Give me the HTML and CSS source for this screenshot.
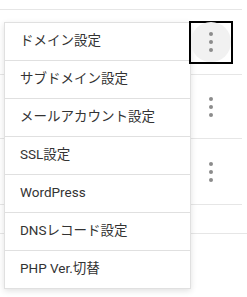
FILE: index.html
```html
<!DOCTYPE html>
<html lang="ja">
<head>
    <meta charset="UTF-8">
    <meta name="viewport" content="width=device-width, initial-scale=1.0">
    <title>ドメイン一覧</title>
    <link rel="stylesheet" href="styles.css">
</head>
<body>
    <div class="list">
        <div class="row">
            <div class="action-focus">
                <button class="action-button active" aria-label="メニュー">
                    <svg width="4" height="20" viewBox="0 0 4 20"><circle cx="2" cy="2" r="2"/><circle cx="2" cy="10" r="2"/><circle cx="2" cy="18" r="2"/></svg>
                </button>
            </div>
        </div>
        <div class="row row-short">
            <div class="action-cell">
                <button class="action-button" aria-label="メニュー">
                    <svg width="4" height="20" viewBox="0 0 4 20"><circle cx="2" cy="2" r="2"/><circle cx="2" cy="10" r="2"/><circle cx="2" cy="18" r="2"/></svg>
                </button>
            </div>
        </div>
        <div class="row row-tall">
            <div class="action-cell">
                <button class="action-button" aria-label="メニュー">
                    <svg width="4" height="20" viewBox="0 0 4 20"><circle cx="2" cy="2" r="2"/><circle cx="2" cy="10" r="2"/><circle cx="2" cy="18" r="2"/></svg>
                </button>
            </div>
        </div>
    </div>
    <div class="footer"></div>

    <ul class="menu">
        <li>ドメイン設定</li>
        <li>サブドメイン設定</li>
        <li>メールアカウント設定</li>
        <li>SSL設定</li>
        <li>WordPress</li>
        <li>DNSレコード設定</li>
        <li>PHP Ver.切替</li>
    </ul>
</body>
</html>
```

FILE: styles.css
```css
body {
    margin: 0;
    background: #fff;
    font-family: Roboto, "Noto Sans CJK JP", sans-serif;
    color: #333;
}

.list {
    width: 242px;
    margin-top: 9px;
    border-top: 1px solid #e6e6e6;
}

.row {
    display: flex;
    justify-content: flex-end;
    align-items: center;
    height: 64px;
    padding-right: 9px;
    border-bottom: 1px solid #e6e6e6;
}

.row-short {
    height: 63px;
}

.row-tall {
    height: 65px;
}

.action-cell {
    display: flex;
    justify-content: center;
    width: 44px;
}

.action-focus {
    position: relative;
    z-index: 2;
    display: flex;
    justify-content: center;
    align-items: center;
    width: 40px;
    height: 39px;
    border: 2px solid #000;
}

.action-button {
    display: flex;
    justify-content: center;
    align-items: center;
    width: 40px;
    height: 40px;
    padding: 0;
    border: none;
    border-radius: 50%;
    background: none;
    fill: #8c8c8c;
}

.action-button.active {
    background: #f1f1f1;
}

.footer {
    margin-top: 28px;
    border-top: 1px solid #e6e6e6;
}

.menu {
    position: absolute;
    top: 22px;
    left: 4px;
    z-index: 1;
    width: 187px;
    box-sizing: border-box;
    margin: 0;
    padding: 0;
    list-style: none;
    background: #fff;
    border: 1px solid #e0e0e0;
    box-shadow: 0 2px 6px rgba(0, 0, 0, 0.12);
}

.menu li {
    display: flex;
    align-items: center;
    box-sizing: border-box;
    height: 38px;
    padding: 0 0 3px 15px;
    font-size: 13.5px;
    line-height: 16px;
    border-bottom: 1px solid #e0e0e0;
}

.menu li:last-child {
    height: 37px;
    border-bottom: none;
}
```
